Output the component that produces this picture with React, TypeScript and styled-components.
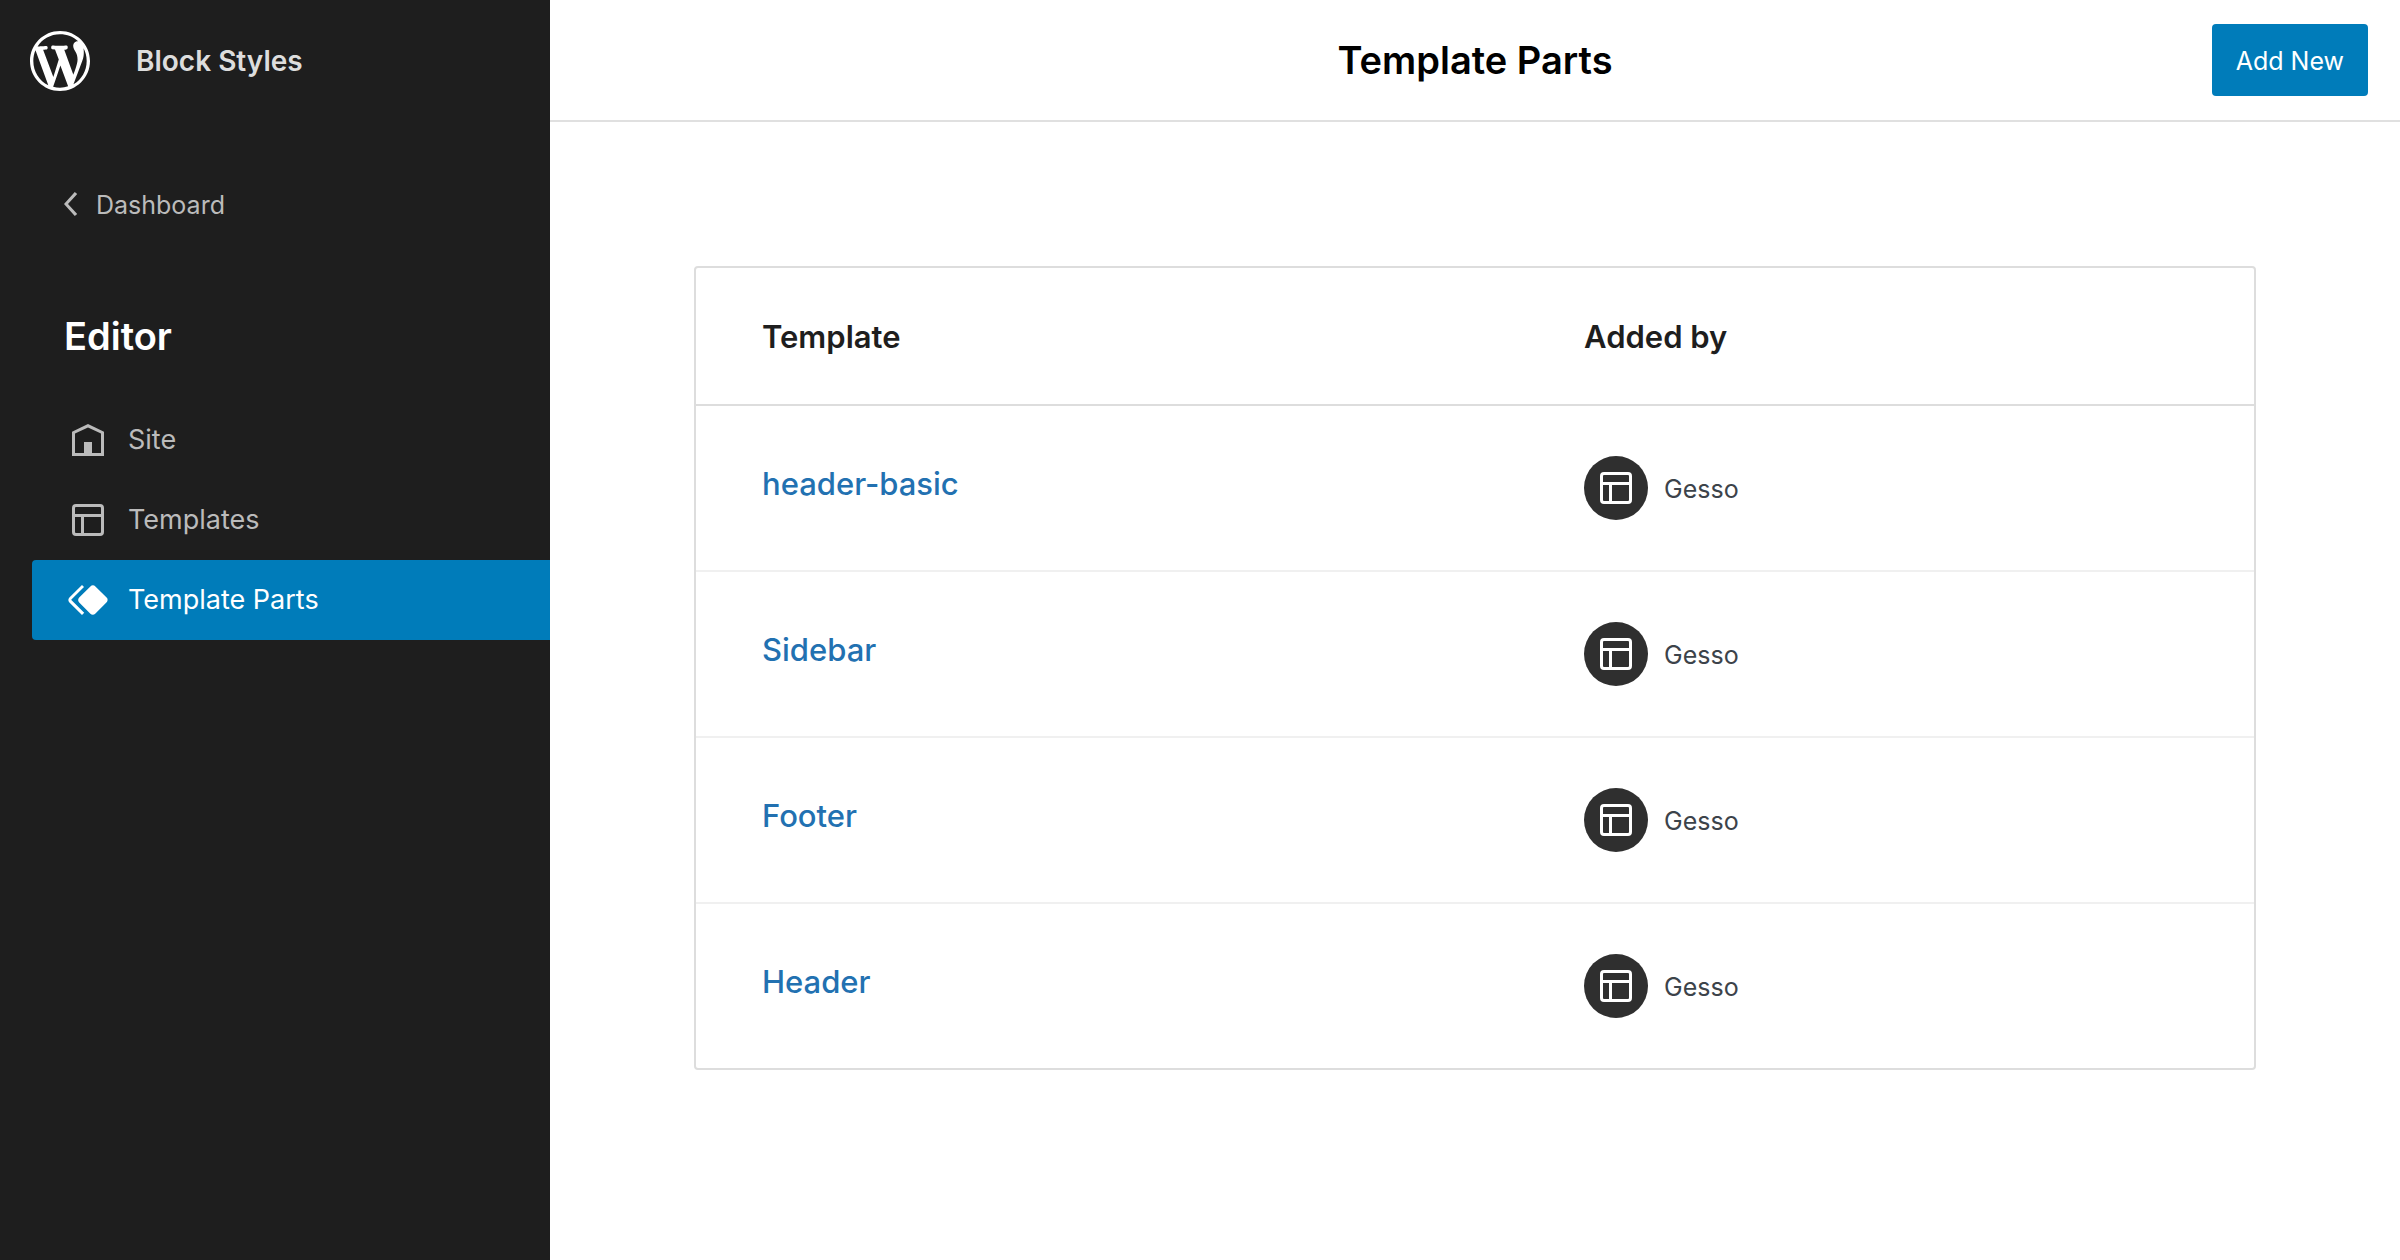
import React from "react";
import styled, { createGlobalStyle } from "styled-components";

const GlobalStyle = createGlobalStyle`
  *, *::before, *::after { box-sizing: border-box; }
  body {
    margin: 0;
    background: #fff;
    color: #1e1e1e;
    font-family: Inter, "Liberation Sans", sans-serif;
    font-size: 25px;
    line-height: 32px;
  }
  a { text-decoration: none; }
`;

const Layout = styled.div`
  display: grid;
  grid-template-columns: 550px minmax(0, 1fr);
  min-height: 100vh;
`;

const Sidebar = styled.nav`
  background: #1e1e1e;
  color: #bbb;
`;

const SiteHub = styled.header`
  display: flex;
  align-items: center;
  gap: 40px;
  height: 122px;
  padding: 0 24px;
`;

const LogoLink = styled.a`
  display: flex;
  color: #fff;
`;

const Logo = styled.svg`
  width: 72px;
  height: 72px;
  fill: currentColor;
`;

const SiteTitle = styled.span`
  color: #ddd;
  font-weight: 600;
  font-size: 28px;
`;

const BackLink = styled.a`
  display: flex;
  align-items: center;
  height: 48px;
  margin: 58px 48px 0;
  color: #bbb;
`;

const Label = styled.span`
  padding-top: 2px;
`;

const SidebarHeading = styled.h2`
  margin: 84px 64px 40px;
  color: #fff;
  font-size: 38px;
  font-weight: 600;
  line-height: 48px;
`;

const Menu = styled.ul`
  list-style: none;
  margin: 0;
  padding: 0 0 0 32px;
`;

const MenuLink = styled.a<{ $active?: boolean }>`
  display: flex;
  align-items: center;
  gap: 16px;
  height: 80px;
  padding: 0 32px;
  border-radius: 4px 0 0 4px;
  background: ${(p) => (p.$active ? "#007cba" : "transparent")};
  color: ${(p) => (p.$active ? "#fff" : "#bbb")};
  font-size: 27px;
`;

const Icon = styled.svg`
  flex: none;
  width: 48px;
  height: 48px;
  fill: currentColor;
`;

const Main = styled.main`
  display: flex;
  flex-direction: column;
`;

const TopBar = styled.header`
  display: grid;
  grid-template-columns: 1fr auto 1fr;
  align-items: center;
  height: 122px;
  padding: 0 32px;
  border-bottom: 2px solid #e0e0e0;
`;

const PageTitle = styled.h1`
  grid-column: 2;
  margin: 0;
  color: #000;
  font-size: 38px;
  font-weight: 600;
  line-height: 48px;
`;

const AddButton = styled.button`
  justify-self: end;
  height: 72px;
  padding: 2px 24px 0;
  border: 0;
  border-radius: 4px;
  background: #007cba;
  color: #fff;
  font: inherit;
`;

const Content = styled.section`
  padding: 144px;
`;

const Table = styled.table`
  width: 100%;
  table-layout: fixed;
  border: 2px solid #ddd;
  border-radius: 4px;
  border-spacing: 0;
  text-align: left;
`;

const HeadCell = styled.th<{ $width?: string }>`
  width: ${(p) => p.$width ?? "auto"};
  height: 138px;
  padding: 2px 0 0 66px;
  border-bottom: 2px solid #ddd;
  font-size: 31px;
  font-weight: 600;

  & + & { padding-left: 0; }
`;

const Row = styled.tr`
  & > td {
    height: 166px;
    padding: 0;
    border-bottom: 2px solid #f0f0f0;
  }
  & > td:first-child {
    padding: 0 0 6px 66px;
  }
  &:last-child > td {
    height: 164px;
    border-bottom: 0;
  }
`;

const PartLink = styled.a`
  color: #2271b1;
  font-size: 31px;
  font-weight: 500;
`;

const Author = styled.div`
  display: flex;
  align-items: center;
  gap: 16px;
  color: #3c434a;
`;

const Avatar = styled.span`
  display: flex;
  align-items: center;
  justify-content: center;
  width: 64px;
  height: 64px;
  border-radius: 50%;
  background: #2f2f2f;
  color: #fff;
`;

const paths = {
  chevron: "M14.6 7l-1.2-1L8 12l5.4 6 1.2-1-4.6-5z",
  home: "M12 4L4 7.9V20h16V7.9L12 4zm6.5 14.5H14V13h-4v5.5H5.5V8.8L12 5.7l6.5 3.1v9.7z",
  layout:
    "M18 5.5H6a.5.5 0 00-.5.5v3h13V6a.5.5 0 00-.5-.5zm.5 5H10v8h8a.5.5 0 00.5-.5v-7.5zm-10 0h-3V18a.5.5 0 00.5.5h2.5v-8zM6 4h12a2 2 0 012 2v12a2 2 0 01-2 2H6a2 2 0 01-2-2V6a2 2 0 012-2z",
  symbol:
    "M21.3 10.8l-5.6-5.6c-.7-.7-1.8-.7-2.5 0l-5.6 5.6c-.7.7-.7 1.8 0 2.5l5.6 5.6c.3.3.8.5 1.2.5s.9-.2 1.2-.5l5.6-5.6c.8-.7.8-1.9.1-2.5zm-17.6 1L10 5.5l-1-1-6.3 6.3c-.7.7-.7 1.8 0 2.5L9 19.5l1.1-1.1-6.3-6.3c-.2 0-.2-.2-.1-.3z",
};

function Glyph({ name }: { name: keyof typeof paths }) {
  return (
    <Icon viewBox="0 0 24 24" aria-hidden="true">
      <path d={paths[name]} fillRule="evenodd" />
    </Icon>
  );
}

function WordPressLogo() {
  return (
    <Logo viewBox="-2 -2 24 24" aria-hidden="true">
      <path d="M20 10c0-5.51-4.49-10-10-10C4.48 0 0 4.49 0 10c0 5.52 4.48 10 10 10 5.51 0 10-4.48 10-10zM7.78 15.37L4.37 6.22c.55-.02 1.17-.08 1.17-.08.5-.06.44-1.13-.06-1.11 0 0-1.45.11-2.37.11-.18 0-.37 0-.58-.01C4.12 2.69 6.87 1.11 10 1.11c2.33 0 4.45.87 6.05 2.34-.68-.11-1.65.39-1.65 1.58 0 .74.45 1.36.9 2.1.35.61.55 1.36.55 2.46 0 1.49-1.4 5-1.4 5l-3.03-8.37c.54-.02.82-.17.82-.17.5-.05.44-1.25-.06-1.22 0 0-1.44.12-2.38.12-.87 0-2.33-.12-2.33-.12-.5-.03-.56 1.2-.06 1.22l.92.08 1.26 3.41zM17.41 10c.24-.64.74-1.87.43-4.25.7 1.29 1.05 2.71 1.05 4.25 0 3.29-1.73 6.24-4.4 7.78.97-2.59 1.94-5.2 2.92-7.78zM6.1 18.09C3.12 16.65 1.11 13.53 1.11 10c0-1.3.23-2.48.72-3.59C3.25 10.3 4.67 14.2 6.1 18.09zm4.03-6.63l2.58 6.98c-.86.29-1.76.45-2.71.45-.79 0-1.57-.11-2.29-.33.81-2.38 1.62-4.74 2.42-7.1z" />
    </Logo>
  );
}

const menu: { label: string; icon: keyof typeof paths; active?: boolean }[] = [
  { label: "Site", icon: "home" },
  { label: "Templates", icon: "layout" },
  { label: "Template Parts", icon: "symbol", active: true },
];

const parts = [
  { name: "header-basic", author: "Gesso" },
  { name: "Sidebar", author: "Gesso" },
  { name: "Footer", author: "Gesso" },
  { name: "Header", author: "Gesso" },
];

export default function App() {
  return (
    <>
      <GlobalStyle />
      <Layout>
        <Sidebar>
          <SiteHub>
            <LogoLink href="#" aria-label="WordPress">
              <WordPressLogo />
            </LogoLink>
            <SiteTitle>Block Styles</SiteTitle>
          </SiteHub>
          <BackLink href="#">
            <Glyph name="chevron" />
            <Label>Dashboard</Label>
          </BackLink>
          <SidebarHeading>Editor</SidebarHeading>
          <Menu>
            {menu.map((item) => (
              <li key={item.label}>
                <MenuLink
                  href="#"
                  $active={item.active}
                  aria-current={item.active ? "page" : undefined}
                >
                  <Glyph name={item.icon} />
                  {item.label}
                </MenuLink>
              </li>
            ))}
          </Menu>
        </Sidebar>
        <Main>
          <TopBar>
            <PageTitle>Template Parts</PageTitle>
            <AddButton type="button">Add New</AddButton>
          </TopBar>
          <Content>
            <Table>
              <thead>
                <tr>
                  <HeadCell scope="col" $width="57%">Template</HeadCell>
                  <HeadCell scope="col">Added by</HeadCell>
                </tr>
              </thead>
              <tbody>
                {parts.map((part) => (
                  <Row key={part.name}>
                    <td>
                      <PartLink href="#">{part.name}</PartLink>
                    </td>
                    <td>
                      <Author>
                        <Avatar>
                          <Glyph name="layout" />
                        </Avatar>
                        <Label>{part.author}</Label>
                      </Author>
                    </td>
                  </Row>
                ))}
              </tbody>
            </Table>
          </Content>
        </Main>
      </Layout>
    </>
  );
}
